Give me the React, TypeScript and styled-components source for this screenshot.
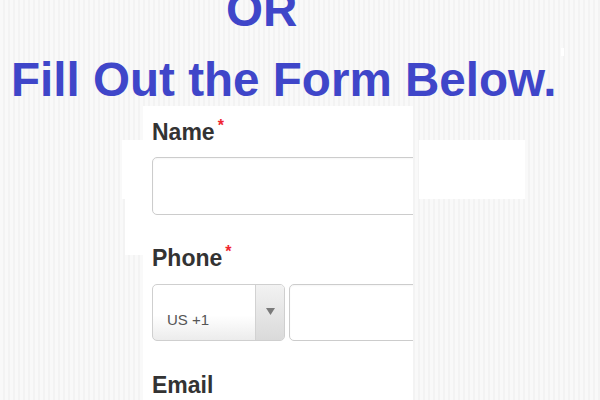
import styled, { createGlobalStyle } from "styled-components";

const GlobalStyle = createGlobalStyle`
  html, body {
    margin: 0;
    padding: 0;
    height: 100%;
    overflow: hidden;
  }
  body {
    background-color: #f9f9f9;
    background-image: repeating-linear-gradient(
      90deg,
      #f9f9f9 0px,
      #f9f9f9 3px,
      #f3f3f3 3px,
      #f3f3f3 5px
    );
    font-family: "Liberation Sans", Arial, sans-serif;
  }
`;

const Page = styled.div`
  width: 600px;
  height: 400px;
  overflow: hidden;
`;

const Heading = styled.h1`
  margin: 0;
  font-family: "Liberation Sans", Arial, sans-serif;
  font-weight: bold;
  font-size: 47.6px;
  line-height: 52px;
  color: #3f46c9;
  white-space: nowrap;
`;

const Or = styled(Heading)`
  margin-top: -16px;
  padding-left: 226px;
`;

const Title = styled(Heading)`
  margin-top: 18px;
  padding-left: 11px;
`;

const Speck = styled.span`
  display: inline-block;
  width: 3px;
  height: 8px;
  margin: -6px 0 0 4px;
  background: #ffffff;
  vertical-align: top;
`;

const FormArea = styled.div`
  display: flex;
  align-items: flex-start;
  padding-left: 122px;
`;

const LeftFill = styled.div`
  display: flex;
  flex-direction: column;
  align-items: flex-end;
  width: 21px;
  margin-top: 34px;
`;

const FillBlock = styled.div<{ $w: number; $h: number }>`
  width: ${(p) => p.$w}px;
  height: ${(p) => p.$h}px;
  background: #ffffff;
`;

const RightFill = styled(FillBlock)`
  margin-top: 34px;
  margin-left: 6px;
`;

const Panel = styled.form`
  width: 270px;
  height: 300px;
  background: #ffffff;
  padding: 14px 0 0 9px;
  box-sizing: border-box;
  overflow: hidden;
`;

const Label = styled.div<{ $gap: number }>`
  margin-top: ${(p) => p.$gap}px;
  font-family: "Liberation Sans", Arial, sans-serif;
  font-weight: bold;
  font-size: 23px;
  line-height: 24px;
  color: #333333;
  white-space: nowrap;
`;

const Required = styled.span`
  color: #f0252f;
  font-size: 16px;
  line-height: 0;
  vertical-align: 9px;
  margin-left: 3px;
`;

const TextInput = styled.div`
  width: 320px;
  height: 58px;
  margin-top: 13px;
  box-sizing: border-box;
  border: 1px solid #cccccc;
  border-radius: 5px;
  background: #ffffff;
  box-shadow: inset 0 1px 2px rgba(0, 0, 0, 0.04);
`;

const PhoneRow = styled.div`
  display: flex;
  gap: 4px;
  margin-top: 14px;
  height: 57px;
`;

const CountrySelect = styled.div`
  display: flex;
  flex: 0 0 133px;
  box-sizing: border-box;
  border: 1px solid #cfcfcf;
  border-radius: 5px;
  overflow: hidden;
  background: linear-gradient(#ffffff 0%, #ffffff 55%, #ececec 100%);
`;

const CountryValue = styled.div`
  flex: 1;
  display: flex;
  align-items: flex-end;
  padding: 0 0 12px 14px;
  font-family: "Liberation Sans", Arial, sans-serif;
  font-size: 15px;
  color: #555555;
`;

const ArrowBox = styled.div`
  flex: 0 0 29px;
  display: flex;
  justify-content: center;
  padding-top: 23px;
  box-sizing: border-box;
  border-left: 1px solid #d2d2d2;
  background: linear-gradient(#f2f2f2, #dadada);
`;

const PhoneInput = styled(TextInput)`
  margin-top: 0;
  height: 57px;
  width: 200px;
  flex: 0 0 200px;
`;

export default function App() {
  return (
    <Page>
      <GlobalStyle />
      <Or>OR</Or>
      <Title>
        Fill Out the Form Below.
        <Speck />
      </Title>
      <FormArea>
        <LeftFill>
          <FillBlock $w={21} $h={59} />
          <FillBlock $w={18} $h={56} />
        </LeftFill>
        <Panel>
          <Label $gap={0}>
            Name<Required>*</Required>
          </Label>
          <TextInput />
          <Label $gap={31}>
            Phone<Required>*</Required>
          </Label>
          <PhoneRow>
            <CountrySelect>
              <CountryValue>US +1</CountryValue>
              <ArrowBox>
                <svg width="9" height="7" viewBox="0 0 9 7">
                  <path d="M0 0 H9 L4.5 7 Z" fill="#7a7a7a" />
                </svg>
              </ArrowBox>
            </CountrySelect>
            <PhoneInput />
          </PhoneRow>
          <Label $gap={32}>Email</Label>
        </Panel>
        <RightFill $w={106} $h={59} />
      </FormArea>
    </Page>
  );
}
